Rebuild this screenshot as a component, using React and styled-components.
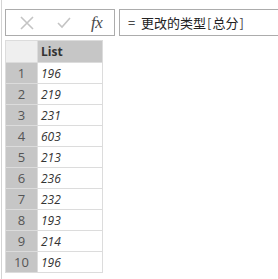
import styled, { createGlobalStyle } from "styled-components";

const GlobalStyle = createGlobalStyle`
  body {
    margin: 0;
    background: #ffffff;
    font-family: "Open Sans", "Liberation Sans", "Noto Sans CJK SC", sans-serif;
  }
`;

const Page = styled.div`
  margin-left: 1px;
  height: 279px;
  border-left: 1px solid #d4d4d4;
  padding-left: 3px;
  box-sizing: border-box;
  overflow: hidden;
`;

const FormulaBar = styled.div`
  display: flex;
  gap: 4px;
  padding-top: 9px;
  height: 27px;
`;

const ButtonBox = styled.div`
  width: 110px;
  height: 27px;
  box-sizing: border-box;
  border: 1px solid #acacac;
  display: flex;
  align-items: center;
  padding-left: 14px;
`;

const BarButton = styled.span`
  width: ${(p) => p.w}px;
  display: flex;
  align-items: center;
`;

const Fx = styled.span`
  font-family: "Liberation Serif", "DejaVu Serif", serif;
  font-style: italic;
  font-size: 17px;
  color: #4a4a4a;
  letter-spacing: -0.5px;
`;

const FormulaBox = styled.div`
  flex: 1;
  height: 27px;
  box-sizing: border-box;
  border: 1px solid #acacac;
  border-right: none;
  display: flex;
  align-items: center;
  padding-left: 8px;
  font-size: 13px;
  color: #222;
  font-family: "Noto Sans CJK SC", "Open Sans", sans-serif;
  white-space: pre;
`;

const Bracket = styled.span`
  padding: 0 1px;
  color: #444;
`;

const Table = styled.table`
  margin-top: 4px;
  border-collapse: collapse;
  table-layout: fixed;
`;

const HeadCell = styled.th`
  height: 22px;
  padding: 0 0 0 3px;
  box-sizing: border-box;
  background: ${(p) => (p.corner ? "#efefef" : "#c6c6c6")};
  width: ${(p) => p.w}px;
  border: 1px solid #dcdcdc;
  text-align: left;
  font-size: 12px;
  font-weight: 700;
  color: #333;
  font-family: "Open Sans", "Liberation Sans", sans-serif;
`;

const NumCell = styled.td`
  height: 20px;
  padding: 0;
  background: #c6c6c6;
  border: 1px solid #dcdcdc;
  text-align: center;
  font-size: 13px;
  color: #555;
`;

const ValueCell = styled.td`
  height: 20px;
  padding: 0 0 0 3px;
  border: 1px solid #dcdcdc;
  font-size: 12px;
  font-style: italic;
  color: #333;
`;

const values = [196, 219, 231, 603, 213, 236, 232, 193, 214, 196];

function CrossIcon() {
  return (
    <svg width="14" height="14" viewBox="0 0 14 14">
      <path d="M1 1 L13 13 M13 1 L1 13" stroke="#c4c4c4" strokeWidth="1.6" fill="none" />
    </svg>
  );
}

function CheckIcon() {
  return (
    <svg width="14" height="12" viewBox="0 0 14 12">
      <path d="M1 6 L5 10 L13 1" stroke="#c4c4c4" strokeWidth="1.6" fill="none" />
    </svg>
  );
}

export default function App() {
  return (
    <>
      <GlobalStyle />
      <Page>
        <FormulaBar>
          <ButtonBox>
            <BarButton w={37}>
              <CrossIcon />
            </BarButton>
            <BarButton w={34}>
              <CheckIcon />
            </BarButton>
            <BarButton w={20}>
              <Fx>fx</Fx>
            </BarButton>
          </ButtonBox>
          <FormulaBox>
            {"=  更改的类型"}
            <Bracket>[</Bracket>总分<Bracket>]</Bracket>
          </FormulaBox>
        </FormulaBar>
        <Table>
          <thead>
            <tr>
              <HeadCell corner w={32}></HeadCell>
              <HeadCell w={65}>List</HeadCell>
            </tr>
          </thead>
          <tbody>
            {values.map((v, i) => (
              <tr key={i}>
                <NumCell>{i + 1}</NumCell>
                <ValueCell>{v}</ValueCell>
              </tr>
            ))}
          </tbody>
        </Table>
      </Page>
    </>
  );
}
